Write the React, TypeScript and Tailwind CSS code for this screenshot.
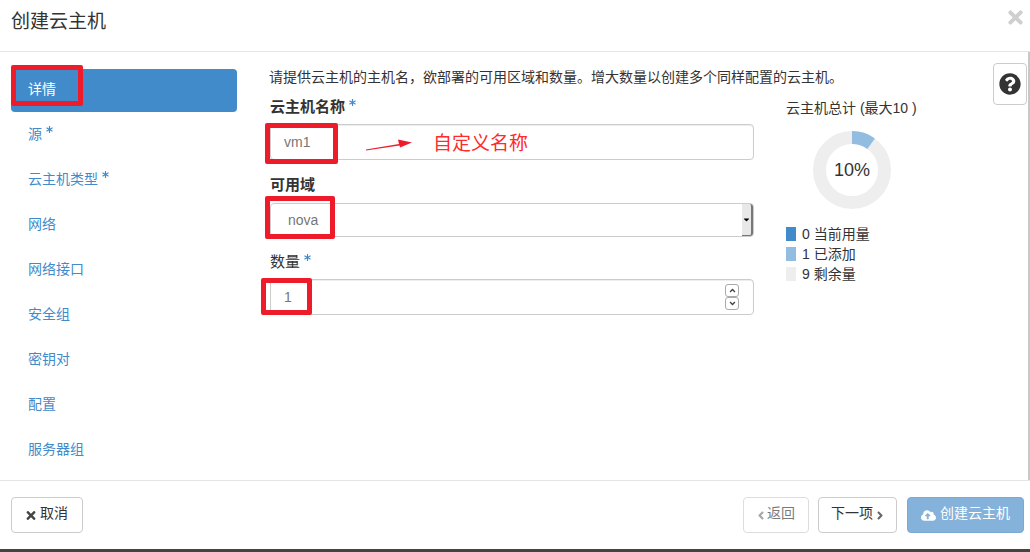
import { FaAngleDown, FaAngleLeft, FaAngleRight, FaAngleUp, FaCloudUploadAlt, FaQuestionCircle, FaTimes, FaCaretDown, FaAsterisk } from 'react-icons/fa'

const navItems = [
    { label: '详情', active: true },
    { label: '源', required: true },
    { label: '云主机类型', required: true },
    { label: '网络' },
    { label: '网络接口' },
    { label: '安全组' },
    { label: '密钥对' },
    { label: '配置' },
    { label: '服务器组' },
]

const legend = [
    { color: 'bg-[#428bca]', text: '0 当前用量' },
    { color: 'bg-[#92bce0]', text: '1 已添加' },
    { color: 'bg-[#eeeeee]', text: '9 剩余量' },
]

function Req() {
    return <FaAsterisk className="inline-block w-[7px] h-[7px] text-[#428bca] ml-[4px] -translate-y-[6px]" />
}

function RedBox({ className }: { className: string }) {
    return <div className={`absolute border-[5px] border-[#ee1c2b] rounded-[2px] pointer-events-none ${className}`} />
}

function Donut() {
    return (
        <div className="relative w-[80px] h-[80px] ml-[26px] mt-[12px]">
            <svg width="80" height="80" viewBox="0 0 80 80">
                <circle cx="40" cy="40" r="32.5" fill="none" stroke="#eeeeee" strokeWidth="13" />
                <path d="M40 1 A39 39 0 0 1 62.9 8.4 L55.3 18.9 A26 26 0 0 0 40 14 Z" fill="#92bce0" />
            </svg>
            <div className="absolute inset-0 flex items-center justify-center text-[18px] text-[#333]">10%</div>
        </div>
    )
}

export default function App() {
    return (
        <div className="w-[1030px] h-[552px] bg-white flex flex-col overflow-hidden text-[#333] text-[14px] font-['Liberation_Sans','Noto_Sans_CJK_SC',sans-serif]">
            {/* Header */}
            <div className="h-[52px] shrink-0 border-b border-[#e5e5e5] flex items-start justify-between pl-[11px] pr-[6px]">
                <h4 className="text-[19px] leading-[20px] mt-[12px]">创建云主机</h4>
                <FaTimes className="w-[17px] h-[21px] mt-[7px] text-[#cfcfcf]" />
            </div>

            {/* Body */}
            <div className="h-[428px] shrink-0 flex border-r-2 border-[#c8c8c8]">
                <div className="w-[270px] shrink-0 pl-[11px] pr-[33px] pt-[17px] flex flex-col gap-[2px]">
                    {navItems.map(item => (
                        <div
                            key={item.label}
                            className={`relative h-[43px] shrink-0 flex items-center pl-[17px] rounded-[4px] ${item.active ? 'bg-[#428bca] text-white' : 'text-[#428bca]'}`}
                        >
                            <span className="mt-[-3px]">{item.label}</span>
                            {item.required && <Req />}
                            {item.active && <RedBox className="left-0 top-[-4px] w-[72px] h-[41px]" />}
                        </div>
                    ))}
                </div>

                <div className="w-[484px] shrink-0 pt-[15px]">
                    <p className="h-[20px] leading-[20px] -ml-px whitespace-nowrap">请提供云主机的主机名，欲部署的可用区域和数量。增大数量以创建多个同样配置的云主机。</p>

                    <label className="block h-[20px] leading-[20px] mt-[10px] font-bold text-[15px]">云主机名称<Req /></label>
                    <div className="relative mt-[7px] h-[36px] border border-[#ccc] rounded-[4px] shadow-[inset_0_1px_1px_rgba(0,0,0,0.075)] flex items-center pl-[13px] text-[#777]">
                        vm1
                        <RedBox className="left-[-6px] top-[-2px] w-[73px] h-[41px]" />
                        <svg className="absolute left-[95px] top-[13px]" width="46" height="13" viewBox="0 0 46 13">
                            <path d="M0 11.5 L33 6 L32 1.5 L46 4.5 L34 9.5 L33.5 7.5 L0 12.5 Z" fill="#ee1c2b" />
                        </svg>
                        <span className="absolute left-[162px] top-[6px] text-[19px] leading-[26px] text-[#ff2a2a] whitespace-nowrap">自定义名称</span>
                    </div>

                    <label className="block h-[20px] leading-[20px] mt-[15px] font-bold text-[15px]">可用域</label>
                    <div className="relative mt-[8px] h-[34px] border border-[#ccc] rounded-[4px] flex items-center justify-between pl-[17px] text-[#777]">
                        nova
                        <div className="h-[32px] w-[11px] bg-[#e8e8e8] border-r-2 border-b border-[#777] rounded-r-[3px] flex items-center justify-center">
                            <FaCaretDown className="w-[9px] h-[9px] text-black" />
                        </div>
                        <RedBox className="left-[-6px] top-[-8px] w-[70px] h-[43px]" />
                    </div>

                    <label className="block h-[20px] leading-[20px] mt-[15px] text-[15px]">数量<Req /></label>
                    <div className="relative mt-[7px] h-[36px] border border-[#ccc] rounded-[4px] shadow-[inset_0_1px_1px_rgba(0,0,0,0.075)] flex items-center justify-between pl-[13px] pr-[14px] text-[#777]">
                        1
                        <div className="flex flex-col">
                            <div className="w-[14px] h-[13px] border border-[#aaa] rounded-[3px] flex items-center justify-center">
                                <FaAngleUp className="w-[9px] h-[9px] text-[#444]" />
                            </div>
                            <div className="w-[14px] h-[13px] border border-[#aaa] rounded-[3px] flex items-center justify-center">
                                <FaAngleDown className="w-[9px] h-[9px] text-[#444]" />
                            </div>
                        </div>
                        <RedBox className="left-[-10px] top-[-2px] w-[51px] h-[37px]" />
                    </div>
                </div>

                <div className="ml-[32px] w-[150px] shrink-0 pt-[46px]">
                    <div className="h-[20px] leading-[20px] whitespace-nowrap text-[14px]">云主机总计 (最大10 )</div>
                    <Donut />
                    <div className="mt-[17px] flex flex-col gap-[6px]">
                        {legend.map(row => (
                            <div key={row.text} className="flex items-center h-[14px] whitespace-pre">
                                <span className={`w-[10px] h-[14px] mr-[6px] ${row.color}`} />
                                <span>{row.text}</span>
                            </div>
                        ))}
                    </div>
                </div>

                <div className="ml-auto mr-px mt-[11px] w-[34px] h-[42px] border border-[#ccc] rounded-[4px] flex items-center justify-center">
                    <FaQuestionCircle className="w-[22px] h-[22px] text-[#333]" />
                </div>
            </div>

            {/* Footer */}
            <div className="h-[69px] shrink-0 border-t border-[#e5e5e5] flex items-start justify-between pl-[11px] pr-[6px] pt-[16px]">
                <button className="w-[72px] h-[36px] border border-[#ccc] rounded-[4px] flex items-center justify-center gap-[4px]">
                    <FaTimes className="w-[10px] h-[13px] text-[#444]" />
                    <span className="mb-[3px]">取消</span>
                </button>
                <div className="flex gap-[9px]">
                    <button className="w-[66px] h-[36px] border border-[#ccc] rounded-[4px] flex items-center justify-center gap-[2px] opacity-65">
                        <FaAngleLeft className="w-[8px] h-[13px] text-[#777]" />
                        <span className="mb-[3px]">返回</span>
                    </button>
                    <button className="w-[79px] h-[36px] border border-[#ccc] rounded-[4px] flex items-center justify-center gap-[3px]">
                        <span className="mb-[3px]">下一项</span>
                        <FaAngleRight className="w-[8px] h-[13px] text-[#666]" />
                    </button>
                    <button className="w-[117px] h-[36px] ml-px bg-[#84b2da] border border-[#7aa9d3] rounded-[4px] text-white flex items-center justify-center gap-[4px]">
                        <FaCloudUploadAlt className="w-[15px] h-[15px]" />
                        <span className="mb-[3px]">创建云主机</span>
                    </button>
                </div>
            </div>

            <div className="h-[3px] shrink-0 bg-[#444]" />
        </div>
    )
}
